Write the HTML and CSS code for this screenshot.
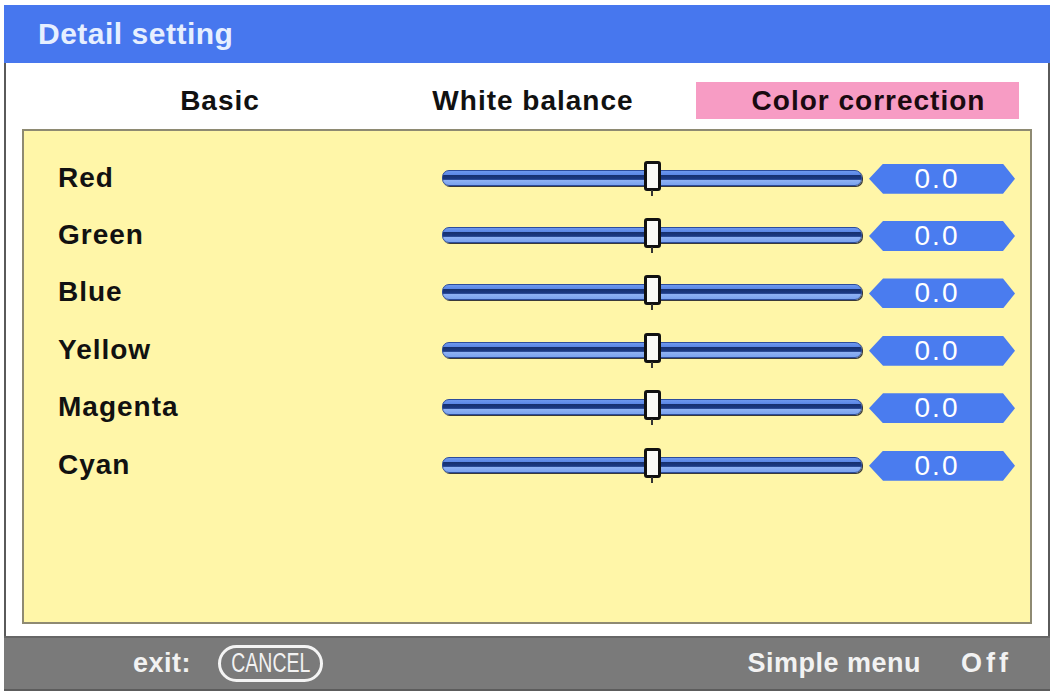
FILE: index.html
```html
<!DOCTYPE html>
<html lang="en">
<head>
    <meta charset="UTF-8">
    <title>Detail setting</title>
    <link rel="stylesheet" href="styles.css">
</head>
<body>
    <div class="window">
        <div class="titlebar">Detail setting</div>

        <div class="content">
            <div class="tabs">
                <div class="tab tab-basic">Basic</div>
                <div class="tab tab-white">White balance</div>
                <div class="tab tab-color active">Color correction</div>
            </div>

            <div class="panel">
                <div class="row">
                    <div class="label">Red</div>
                    <div class="track"><div class="thumb"></div></div>
                    <div class="value">0.0</div>
                </div>
                <div class="row">
                    <div class="label">Green</div>
                    <div class="track"><div class="thumb"></div></div>
                    <div class="value">0.0</div>
                </div>
                <div class="row">
                    <div class="label">Blue</div>
                    <div class="track"><div class="thumb"></div></div>
                    <div class="value">0.0</div>
                </div>
                <div class="row">
                    <div class="label">Yellow</div>
                    <div class="track"><div class="thumb"></div></div>
                    <div class="value">0.0</div>
                </div>
                <div class="row">
                    <div class="label">Magenta</div>
                    <div class="track"><div class="thumb"></div></div>
                    <div class="value">0.0</div>
                </div>
                <div class="row">
                    <div class="label">Cyan</div>
                    <div class="track"><div class="thumb"></div></div>
                    <div class="value">0.0</div>
                </div>
            </div>
        </div>

        <div class="footer">
            <span class="exit">exit:</span>
            <span class="cancel"><span class="cancel-text">CANCEL</span></span>
            <span class="simple">Simple menu</span>
            <span class="off">Off</span>
        </div>
    </div>
</body>
</html>
```

FILE: styles.css
```css
body {
    margin: 0;
    background: #ffffff;
    font-family: "Liberation Sans", Arial, sans-serif;
    font-weight: bold;
}
.window {
    margin: 5px 3px 0 4px;
    width: 1046px;
}
.titlebar {
    height: 58px;
    background: #4777ee;
    color: #e6efff;
    font-size: 30px;
    letter-spacing: 0.5px;
    line-height: 58px;
    padding-left: 34px;
    box-sizing: border-box;
}
.content {
    background: #ffffff;
    border-left: 2px solid #5a5a5a;
    border-right: 2px solid #5a5a5a;
    padding: 19px 16px 12px 16px;
}
.tabs {
    display: flex;
    padding-left: 48px;
    height: 37px;
    margin-bottom: 10px;
}
.tab {
    font-size: 28px;
    letter-spacing: 1px;
    color: #111;
    text-align: center;
    line-height: 37px;
}
.tab-basic { width: 300px; }
.tab-white { width: 326px; }
.tab-color { width: 323px; }
.tab.active {
    background: #f79cc4;
    color: #1a0a10;
    padding-left: 22px;
    box-sizing: border-box;
}
.panel {
    background: #fff6a8;
    border: 2px solid #8e8a72;
    padding: 18px 0 0 34px;
    box-sizing: border-box;
    height: 495px;
}
.row {
    display: flex;
    align-items: center;
    height: 57.4px;
}
.label {
    width: 384px;
    font-size: 28px;
    letter-spacing: 1px;
    color: #111;
}
.track {
    position: relative;
    width: 418px;
    height: 14px;
    border-radius: 7px;
    border: 1px solid #2c4c9c;
    background: linear-gradient(to bottom, #6d98ee 0%, #5c88e6 25%, #16306e 30%, #1b3a86 60%, #8fb2f4 65%, #7aa2ee 100%);
    box-shadow: 1px 1px 0 #3a3a3a;
}
.thumb {
    position: absolute;
    left: 201px;
    top: -10px;
    width: 11px;
    height: 24px;
    background: #fafaf6;
    border: 3px solid #111;
    border-radius: 3px;
}
.thumb::after {
    content: "";
    position: absolute;
    left: 4px;
    top: 26px;
    width: 2px;
    height: 6px;
    background: #333;
}
.value {
    margin-left: 7px;
    width: 146px;
    height: 30px;
    background: #4a7cef;
    clip-path: polygon(0 50%, 14px 0, calc(100% - 12px) 0, 100% 50%, calc(100% - 12px) 100%, 14px 100%);
    color: #ffffff;
    font-size: 28px;
    font-weight: normal;
    letter-spacing: 2px;
    text-align: center;
    line-height: 30px;
    padding-right: 10px;
    box-sizing: border-box;
    margin-top: 2px;
}
.footer {
    display: flex;
    align-items: center;
    height: 55px;
    box-sizing: border-box;
    background: #7a7a7a;
    border-top: 2px solid #666;
    border-bottom: 2px solid #5c5c5c;
    padding: 0 38px 0 129px;
    color: #f2f2f2;
    font-size: 27px;
    letter-spacing: 0.5px;
}
.exit {
    margin-right: 27px;
}
.cancel {
    display: inline-flex;
    align-items: center;
    justify-content: center;
    width: 105px;
    height: 37px;
    box-sizing: border-box;
    border: 3px solid #f4f4f4;
    border-radius: 19px;
}
.cancel-text {
    display: inline-block;
    font-size: 27px;
    font-weight: normal;
    letter-spacing: 0;
    transform: scaleX(0.72);
}
.simple {
    margin-left: auto;
}
.off {
    margin-left: 40px;
    letter-spacing: 4px;
}
```
